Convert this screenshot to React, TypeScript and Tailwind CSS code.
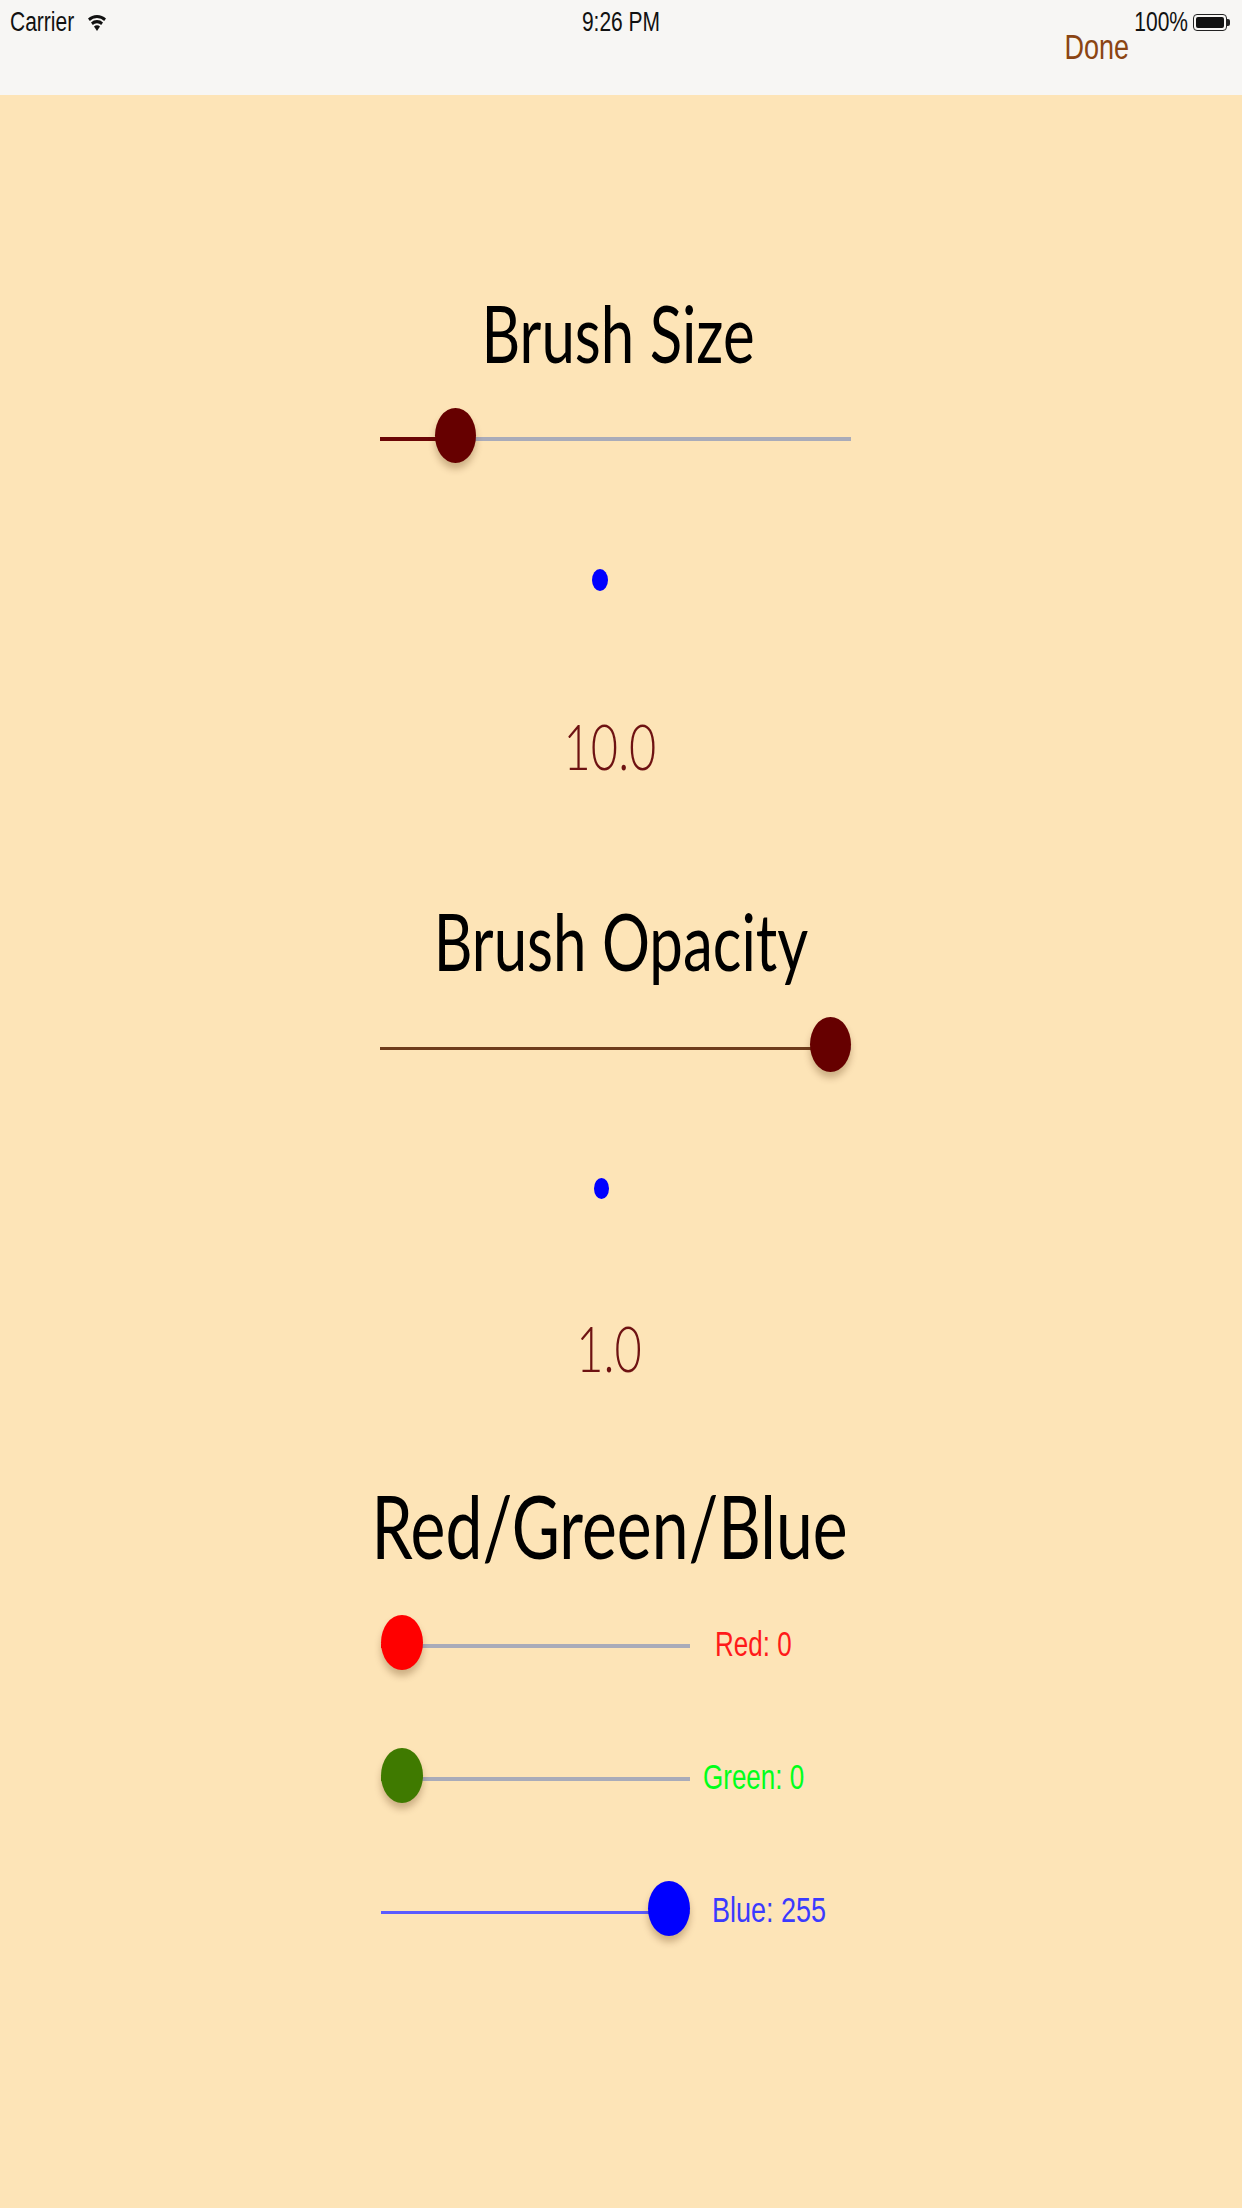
import React from 'react';

type SliderProps = {
  width: number;
  fraction: number;
  thumb: string;
  minTrack: string;
  maxTrack: string;
  thumbW: number;
};

// iOS style slider: filled track up to the thumb, rest of the track after it
const Slider: React.FC<SliderProps & { className: string }> = ({ width, fraction, thumb, minTrack, maxTrack, thumbW, className }) => {
  const left = fraction * (width - thumbW);
  const center = left + thumbW / 2;
  return (
    <div className={`relative flex items-center h-[60px] ${className}`}>
      <div className={`mt-[4px] ${minTrack}`} style={{ width: center }} />
      <div className={`mt-[4px] flex-1 ${maxTrack}`} />
      <div
        className={`absolute top-[1px] h-[55px] rounded-[50%] shadow-[0_6px_7px_rgba(80,40,0,0.28)] ${thumb}`}
        style={{ left, width: thumbW }}
      />
    </div>
  );
};

const WifiIcon = () => (
  <svg width="20" height="19" viewBox="0 0 20 19" fill="#111">
    <path d="M1 5.5 A13 13 0 0 1 19 5.5 L17.2 8 A10 10 0 0 0 2.8 8 Z" />
    <path d="M4 9.5 A8.5 8.5 0 0 1 16 9.5 L14.2 12 A5.8 5.8 0 0 0 5.8 12 Z" />
    <path d="M7 13.5 A4 4 0 0 1 13 13.5 L10 18 Z" />
  </svg>
);

const BatteryIcon = () => (
  <div className="flex items-center">
    <div className="w-[34px] h-[17px] rounded-[4px] border-[1.5px] border-[#222] p-[2px]">
      <div className="w-full h-full rounded-[2px] bg-[#111]" />
    </div>
    <div className="w-[3px] h-[7px] rounded-r-[2px] bg-[#222]" />
  </div>
);

const statusText = "font-['Liberation_Sans',Arial,sans-serif] text-[21px] leading-[24px] text-[#111] scale-y-[1.33]";
const titleText = "font-['Lato','Noto_Sans',sans-serif] text-[60px] leading-[60px] text-black scale-y-[1.33]";
const valueText = "font-['Lato','Noto_Sans',sans-serif] font-light text-[47px] leading-[47px] text-[#6e1212] scale-y-[1.33]";
const labelText = "font-['Liberation_Sans',Arial,sans-serif] text-[26px] leading-[30px] scale-y-[1.33]";

export default function App() {
  return (
    <div className="min-h-[2208px] w-full bg-[#fde4b7] flex flex-col">
      <div className="h-[95px] bg-[#f7f6f4] flex flex-col">
        <div className="mt-[10px] h-[24px] grid grid-cols-3 items-center px-[10px]">
          <div className="flex items-center gap-[13px]">
            <span className={statusText}>Carrier</span>
            <WifiIcon />
          </div>
          <div className="flex justify-center">
            <span className={statusText}>9:26 PM</span>
          </div>
          <div className="flex justify-end items-center gap-[5px] pr-[2px]">
            <span className={`${statusText} text-[20px]`}>100%</span>
            <BatteryIcon />
          </div>
        </div>
        <div className="h-[26px] flex justify-end items-center pr-[113px]">
          <span className="font-['Liberation_Sans',Arial,sans-serif] text-[27px] leading-[26px] text-[#8b4513] scale-y-[1.33]">
            Done
          </span>
        </div>
      </div>

      <div className="flex flex-col items-center">
        <div className="mt-[187px] h-[100px] flex items-center mr-[6px]">
          <span className={titleText}>Brush Size</span>
        </div>
        <div className="mt-[25px] mr-[11px]">
          <Slider
            className="w-[471px]"
            width={471}
            fraction={0.127}
            thumbW={41}
            thumb="bg-[#660000]"
            minTrack="h-[4px] bg-[#6b0505]"
            maxTrack="h-[4px] bg-[#a9abb9]"
          />
        </div>
        <div className="mt-[93px] h-[40px] flex items-center mr-[42px]">
          <div className="w-[16px] h-[22px] rounded-[50%] bg-[#0000ff]" />
        </div>
        <div className="mt-[106px] h-[80px] flex items-center mr-[22px]">
          <span className={valueText}>10.0</span>
        </div>

        <div className="mt-[104px] h-[100px] flex items-center">
          <span className={titleText}>Brush Opacity</span>
        </div>
        <div className="mt-[26px] mr-[11px]">
          <Slider
            className="w-[471px]"
            width={471}
            fraction={1}
            thumbW={41}
            thumb="bg-[#660000]"
            minTrack="h-[3px] bg-[#6e3c1c]"
            maxTrack="h-[3px] bg-[#a9abb9]"
          />
        </div>
        <div className="mt-[92px] h-[40px] flex items-center mr-[40px]">
          <div className="w-[15px] h-[21px] rounded-[50%] bg-[#0000ff]" />
        </div>
        <div className="mt-[100px] h-[80px] flex items-center mr-[24px]">
          <span className={valueText}>1.0</span>
        </div>

        <div className="mt-[88px] h-[100px] flex items-center mr-[23px]">
          <span className={`${titleText} text-[66px] leading-[66px]`}>Red/Green/Blue</span>
        </div>

        <div className="mt-[38px] self-start ml-[381px] flex items-center">
          <Slider
            className="w-[309px]"
            width={309}
            fraction={0}
            thumbW={42}
            thumb="bg-[#ff0000]"
            minTrack="h-[4px] bg-[#ff0000]"
            maxTrack="h-[4px] bg-[#a9abb9]"
          />
          <span className={`${labelText} ml-[25px] text-[#ff1a1a]`}>Red: 0</span>
        </div>
        <div className="mt-[73px] self-start ml-[381px] flex items-center">
          <Slider
            className="w-[309px]"
            width={309}
            fraction={0}
            thumbW={42}
            thumb="bg-[#3f7a00]"
            minTrack="h-[4px] bg-[#3f7a00]"
            maxTrack="h-[4px] bg-[#a9abb9]"
          />
          <span className={`${labelText} ml-[13px] text-[#00ff1a]`}>Green: 0</span>
        </div>
        <div className="mt-[73px] self-start ml-[381px] flex items-center">
          <Slider
            className="w-[309px]"
            width={309}
            fraction={1}
            thumbW={42}
            thumb="bg-[#0000ff]"
            minTrack="h-[3px] bg-[#5a5aff]"
            maxTrack="h-[3px] bg-[#a9abb9]"
          />
          <span className={`${labelText} ml-[22px] text-[27px] text-[#3a3aff]`}>Blue: 255</span>
        </div>
      </div>
    </div>
  );
}
